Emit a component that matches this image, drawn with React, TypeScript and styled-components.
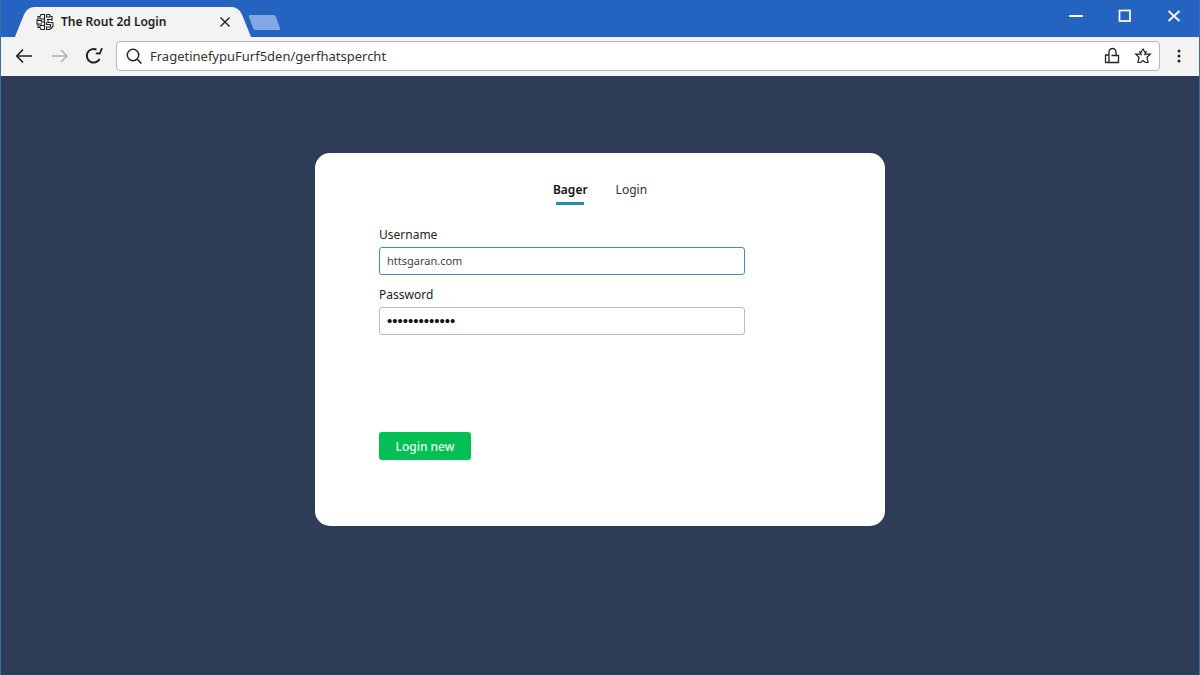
import React from "react";
import styled, { createGlobalStyle } from "styled-components";

const GlobalStyle = createGlobalStyle`
  *, *::before, *::after { box-sizing: border-box; }
  html, body, #root { height: 100%; }
  body { margin: 0; font-family: "Noto Sans", sans-serif; color: #222; }
  button, input { font-family: inherit; }
`;

const Window = styled.div`
  min-height: 100%;
  display: flex;
  flex-direction: column;
  border: 0 solid #3c6cae;
  border-width: 0 1px;
  background: #2f3c57;
`;

const TitleBar = styled.header`
  display: flex;
  height: 37px;
  padding: 7px 13px 0 20px;
  background: #2563c0;
`;

const Tab = styled.div`
  position: relative;
  isolation: isolate;
  display: flex;
  align-items: center;
  width: 224px;
  height: 30px;
  padding: 0 12px 0 15px;

  &::before, &::after {
    content: "";
    position: absolute;
    z-index: -1;
    top: 0;
    bottom: 0;
    width: 60%;
    background: #f3f3f4;
  }
  &::before { left: 0; transform: skewX(-22deg); border-top-left-radius: 7px; }
  &::after { right: 0; transform: skewX(22deg); border-top-right-radius: 7px; }
`;

const TabTitle = styled.span`
  flex: 1;
  margin-left: 7px;
  font-size: 12px;
  line-height: 16px;
  font-weight: 600;
  white-space: nowrap;
`;

const IconButton = styled.button<{ $width?: number; $color?: string }>`
  display: flex;
  align-items: center;
  justify-content: center;
  flex: none;
  width: ${(p) => p.$width ?? 24}px;
  height: 24px;
  padding: 0;
  border: 0;
  background: none;
  color: ${(p) => p.$color ?? "#222"};
`;

const NewTab = styled.button`
  width: 27px;
  height: 15px;
  margin: 8px 0 0 6px;
  padding: 0;
  border: 0;
  border-radius: 2px;
  background: #83a7e4;
  transform: skewX(20deg);
`;

const WindowControls = styled.div`
  display: flex;
  gap: 25px;
  height: 18px;
  align-items: center;
  margin-left: auto;
`;

const Toolbar = styled.nav`
  display: flex;
  align-items: center;
  height: 39px;
  padding: 0 1px 1px 11px;
  background: #f3f3f4;
`;

const NavButtons = styled.div`
  display: flex;
  gap: 11px;
  margin-right: 10px;
`;

const AddressBar = styled.div`
  flex: 1;
  display: flex;
  align-items: center;
  height: 30px;
  padding: 0 4px 0 8px;
  border: 1px solid #b9b9bd;
  border-radius: 4px;
  background: #fff;
`;

const AddressInput = styled.input`
  flex: 1;
  min-width: 0;
  margin-left: 7px;
  padding: 0;
  border: 0;
  outline: 0;
  background: none;
  color: #333;
  font-size: 13px;
  line-height: 18px;
`;

const AddressActions = styled.div`
  display: flex;
  gap: 7px;
`;

const Page = styled.main`
  flex: 1;
  display: flex;
  justify-content: center;
  align-items: flex-start;
  padding: 77px 24px 24px;
`;

const Card = styled.section`
  width: 100%;
  max-width: 570px;
  padding: 27px 64px 66px;
  border-radius: 15px;
  background: #fff;
`;

const Tabs = styled.nav`
  display: flex;
  justify-content: center;
  gap: 28px;
  margin-bottom: 20px;
`;

const TabLink = styled.a<{ $active?: boolean }>`
  display: flex;
  flex-direction: column;
  align-items: center;
  color: ${(p) => (p.$active ? "#111" : "#333")};
  font-size: 12px;
  line-height: 20px;
  font-weight: ${(p) => (p.$active ? 600 : 400)};
  text-decoration: none;

  &::after {
    content: "";
    width: 28px;
    height: 3px;
    margin-top: 2px;
    background: ${(p) => (p.$active ? "#258dab" : "transparent")};
  }
`;

const Form = styled.form`
  display: flex;
  flex-direction: column;
  align-items: flex-start;
`;

const Field = styled.div`
  display: flex;
  flex-direction: column;
  width: 100%;
  max-width: 366px;
  margin-bottom: 10px;
`;

const Label = styled.label`
  margin-bottom: 2px;
  font-size: 12px;
  line-height: 20px;
  color: #222;
`;

const TextInput = styled.input<{ $highlighted?: boolean }>`
  height: 28px;
  padding: 0 7px 1px;
  border: 1px solid ${(p) => (p.$highlighted ? "#3d8fb8" : "#bcbcbf")};
  border-radius: 3px;
  outline: 0;
  background: #fff;
  color: #444;
  font-size: 11px;

  &[type="password"] {
    color: #111;
    font-family: "Liberation Sans", sans-serif;
    font-size: 15px;
  }
`;

const SubmitButton = styled.button`
  width: 92px;
  height: 28px;
  margin-top: 87px;
  padding: 0;
  border: 0;
  border-radius: 3px;
  background: #03bf54;
  color: #e9ffef;
  font-size: 12px;
  font-weight: 500;
`;

const Icon = ({ size, children, stroke = 1.5 }: { size: number; children: React.ReactNode; stroke?: number }) => (
  <svg
    width={size}
    height={size}
    viewBox={`0 0 ${size} ${size}`}
    fill="none"
    stroke="currentColor"
    strokeWidth={stroke}
    aria-hidden="true"
  >
    {children}
  </svg>
);

export default function App() {
  return (
    <>
      <GlobalStyle />
      <Window>
        <TitleBar>
          <Tab>
            <Icon size={18} stroke={1.1}>
              <path d="M8.500 1.500H5L4 3.500H2V7H1V11H2V14.500H4L5 16.500H8.500ZM4 3.500V6H8.500M2 7.500H5.500V9H8.500M1 11H6M4 14.500V12.500H8.500M10.500 1.500H13.500L14.500 3.500H16V6.500H11M10.500 1.500V4H14M16 6.500V8M17 9.500H12V7M17 9.500V13L15.500 15L13.500 16.500H10.500V14H14.500V11.500H10.500V9" />
            </Icon>
            <TabTitle>The Rout 2d Login</TabTitle>
            <IconButton aria-label="Close tab" $width={16}>
              <Icon size={12} stroke={1.4}>
                <path d="M1.500 1.500L10.500 10.500M10.500 1.500L1.500 10.500" />
              </Icon>
            </IconButton>
          </Tab>
          <NewTab aria-label="New tab" />
          <WindowControls>
            <IconButton aria-label="Minimize" $color="#fff">
              <Icon size={16} stroke={2}>
                <path d="M1 8H15" />
              </Icon>
            </IconButton>
            <IconButton aria-label="Maximize" $color="#fff">
              <Icon size={16} stroke={1.7}>
                <rect x="2.500" y="2.500" width="10.500" height="10.500" />
              </Icon>
            </IconButton>
            <IconButton aria-label="Close window" $color="#fff">
              <Icon size={16} stroke={1.7}>
                <path d="M2.500 3L13.500 13M13.500 3L2.500 13" />
              </Icon>
            </IconButton>
          </WindowControls>
        </TitleBar>
        <Toolbar>
          <NavButtons>
            <IconButton aria-label="Back">
              <Icon size={18} stroke={1.7}>
                <path d="M17 9H2M8 2.500L1.800 9L8 15.500" />
              </Icon>
            </IconButton>
            <IconButton aria-label="Forward" $color="#b0b0b3">
              <Icon size={18} stroke={1.5}>
                <path d="M2 9H17M11 3L17 9L11 15" />
              </Icon>
            </IconButton>
            <IconButton aria-label="Reload">
              <Icon size={18} stroke={2}>
                <path d="M11.500 2.600A6.800 6.800 0 1 0 14.600 12" />
                <path d="M17 1.200L14.800 6.500L10.800 6.300" strokeWidth="1.800" />
              </Icon>
            </IconButton>
          </NavButtons>
          <AddressBar>
            <Icon size={18} stroke={1.5}>
              <circle cx="8" cy="8" r="5.700" />
              <path d="M12 12L16.500 16.500" />
            </Icon>
            <AddressInput aria-label="Address" defaultValue="FragetinefypuFurf5den/gerfhatspercht" />
            <AddressActions>
              <IconButton aria-label="Site security">
                <Icon size={18} stroke={1.3}>
                  <path d="M6 7.500V15.500M6 8H2.500V15.500H15.500V8.500H8.500M6 7.500V5A3.500 3.500 0 0 1 13 5V8.500" />
                </Icon>
              </IconButton>
              <IconButton aria-label="Bookmark">
                <Icon size={18} stroke={1.2}>
                  <path d="M9 1.800L7 5.500L6 7.200H1.800L5 10.200L4 15.500H6.500L9 13.500L11.500 15.500H14L13 10.200L16.300 7.200H12L11 5.500L9 1.800M5.500 4L7.500 8.200M12.500 4L10.500 8.200" />
                </Icon>
              </IconButton>
            </AddressActions>
          </AddressBar>
          <IconButton aria-label="Menu" $width={38}>
            <Icon size={18} stroke={0}>
              <g fill="currentColor">
                <circle cx="9" cy="4" r="1.500" />
                <circle cx="9" cy="9" r="1.500" />
                <circle cx="9" cy="14" r="1.500" />
              </g>
            </Icon>
          </IconButton>
        </Toolbar>
        <Page>
          <Card>
            <Tabs>
              <TabLink href="#bager" $active>Bager</TabLink>
              <TabLink href="#login">Login</TabLink>
            </Tabs>
            <Form onSubmit={(e) => e.preventDefault()}>
              <Field>
                <Label htmlFor="username">Username</Label>
                <TextInput id="username" $highlighted defaultValue="httsgaran.com" />
              </Field>
              <Field>
                <Label htmlFor="password">Password</Label>
                <TextInput id="password" type="password" defaultValue="abcdefghijklm" />
              </Field>
              <SubmitButton type="submit">Login new</SubmitButton>
            </Form>
          </Card>
        </Page>
      </Window>
    </>
  );
}
